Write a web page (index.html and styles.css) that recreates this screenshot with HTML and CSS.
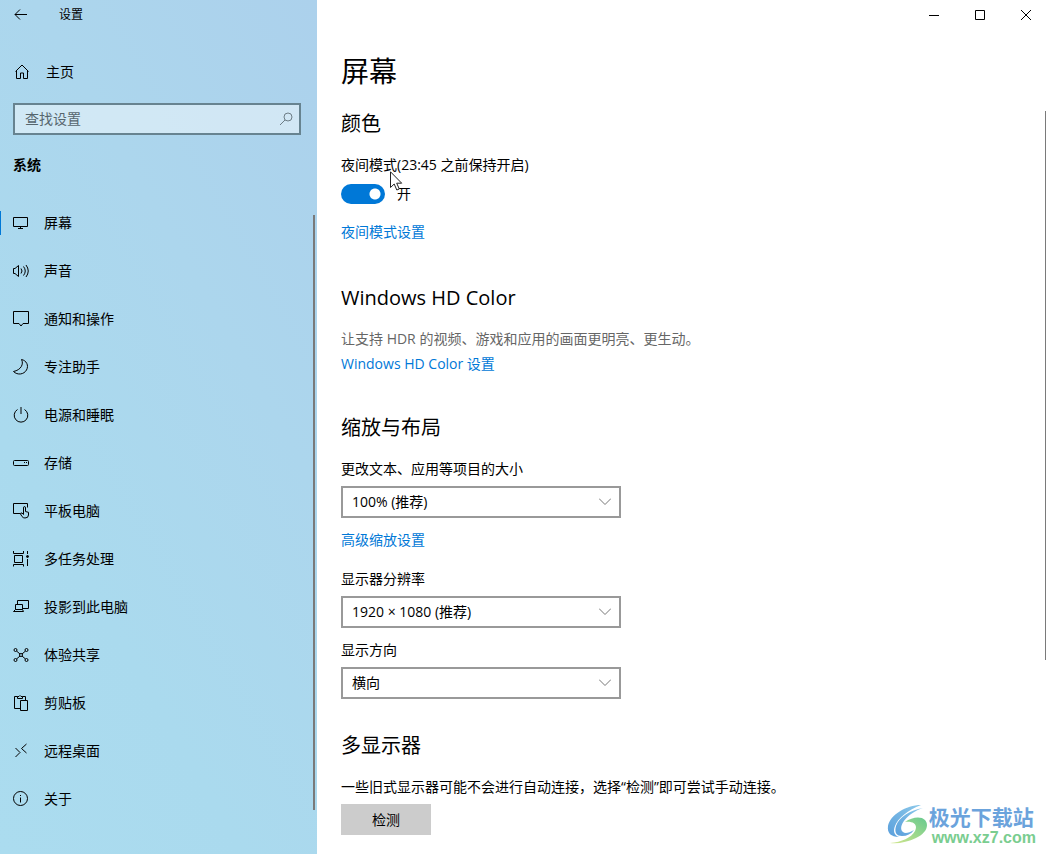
FILE: index.html
```html
<!DOCTYPE html>
<html lang="zh-CN">
<head>
    <meta charset="UTF-8">
    <meta name="viewport" content="width=device-width, initial-scale=1.0">
    <title>设置</title>
    <link rel="stylesheet" href="styles.css">
</head>
<body>
    <div class="window">
        <aside class="sidebar">
            <header class="title-bar">
                <button type="button" class="back" aria-label="返回">
                    <svg class="icon" viewBox="0 0 18 18"><path d="M15 8.500H3M8 3.500l-5 5 5 5"/></svg>
                </button>
                <span class="app-name">设置</span>
            </header>
            <a href="#" class="home">
                <svg class="icon" viewBox="0 0 18 18"><path d="M2.500 8.500L9 2l6.500 6.500M3.500 8v7.500h4V10h3v5.500h4V8"/></svg>
                主页
            </a>
            <div class="search">
                <input type="text" id="search" aria-label="查找设置" placeholder="查找设置">
                <svg class="icon" viewBox="0 0 18 18"><circle cx="11" cy="7" r="4"/><path d="M8 10l-5 5"/></svg>
            </div>
            <h2 class="group">系统</h2>
            <nav class="nav">
                <a href="#" class="active">
                    <svg class="icon" viewBox="0 0 18 18"><path d="M1.500 3.500h14v9h-14zM8.500 12.500v2M6 14.500h5"/></svg>
                    屏幕
                </a>
                <a href="#">
                    <svg class="icon" viewBox="0 0 18 18"><path d="M1.500 6.500H3l3.500-3v11l-3.500-3H1.500zM9 6.500q2 2.500 0 5M11.500 4.500q3.500 4.500 0 9M14 3q4.500 6 0 12"/></svg>
                    声音
                </a>
                <a href="#">
                    <svg class="icon" viewBox="0 0 18 18"><path d="M1.500 1.500h15v12H11L9 16l-2-2.500H1.500z"/></svg>
                    通知和操作
                </a>
                <a href="#">
                    <svg class="icon" viewBox="0 0 18 18"><path d="M9.500 1.500C12 6 9 12 1.500 13.500c4 4 10.500 3 13-1.500S14.500 2.500 9.500 1.500z"/></svg>
                    专注助手
                </a>
                <a href="#">
                    <svg class="icon" viewBox="0 0 18 18"><path d="M9 1v7M5.500 3.500a6.800 6.800 0 1 0 7 0"/></svg>
                    电源和睡眠
                </a>
                <a href="#">
                    <svg class="icon" viewBox="0 0 18 18"><rect x="1.500" y="6.500" width="15" height="5" rx="1"/><path d="M12 8.500h1M14 8.500h1"/></svg>
                    存储
                </a>
                <a href="#">
                    <svg class="icon" viewBox="0 0 18 18"><path d="M8 11.500H1.500v-10h14v4M11.500 11V6q0-1.500 1-1.500t1 1.500v3.500l3 .8v2.700q0 3-3.500 3-2 0-3-1.500L8.500 12q0-1.500 1.500-1l1.500 1.500V10"/></svg>
                    平板电脑
                </a>
                <a href="#">
                    <svg class="icon" viewBox="0 0 18 18"><path d="M1.500 1v2.500h10V1M2.500 5.500h8v7h-8zM1.500 16.500v-2h10v2M15.500 1v3M15.500 9v7"/><circle cx="15.500" cy="6.500" r="1" fill="currentColor"/></svg>
                    多任务处理
                </a>
                <a href="#">
                    <svg class="icon" viewBox="0 0 18 18"><path d="M5.500 6.500v-4h11v8H11M3.500 6.500h7v5h-7zM3.500 11.500l-2 2h10l-1-2"/></svg>
                    投影到此电脑
                </a>
                <a href="#">
                    <svg class="icon" viewBox="0 0 18 18"><circle cx="3.500" cy="4" r="1.500"/><circle cx="14.500" cy="4" r="1.500"/><circle cx="3.500" cy="14" r="1.500"/><circle cx="14.500" cy="14" r="1.500"/><circle cx="9" cy="9" r="1.500"/><path d="M4.500 5l3.500 3M13.500 5L10 8M4.500 13L8 10M13.500 13L10 10"/></svg>
                    体验共享
                </a>
                <a href="#">
                    <svg class="icon" viewBox="0 0 18 18"><path d="M8.500 14.500h-6v-12h3M10.500 2.500h3v4M5.500 4.500v-2H7q1-2 2 0h1.500v2zM8.500 6.500h7v10h-7z"/></svg>
                    剪贴板
                </a>
                <a href="#">
                    <svg class="icon" viewBox="0 0 18 18"><path d="M3.500 6L8 10.500 3.500 15M14.500 2L9.500 6.500 14.500 11"/></svg>
                    远程桌面
                </a>
                <a href="#">
                    <svg class="icon" viewBox="0 0 18 18"><circle cx="8.500" cy="8.500" r="7"/><path d="M8.500 7.500v5M8.500 5v1"/></svg>
                    关于
                </a>
            </nav>
            <div class="scrollbar"></div>
        </aside>

        <main class="content">
            <div class="window-buttons">
                <button type="button" aria-label="最小化"><svg viewBox="0 0 10 10"><path d="M0 5.500h10"/></svg></button>
                <button type="button" aria-label="最大化"><svg viewBox="0 0 10 10"><path d="M.5 .5h9v9h-9z"/></svg></button>
                <button type="button" aria-label="关闭"><svg viewBox="0 0 10 10"><path d="M0 0l10 10M10 0L0 10"/></svg></button>
            </div>

            <h1>屏幕</h1>

            <section>
                <h2>颜色</h2>
                <label for="night">夜间模式(23:45 之前保持开启)</label>
                <div class="toggle">
                    <input type="checkbox" id="night" checked>
                    <span>开</span>
                    <svg class="cursor" viewBox="0 0 13 20"><path d="M.5 .8v15.700l3.700-3.500 2.600 6 2.500-1-2.600-5.800h5z"/></svg>
                </div>
                <a href="#">夜间模式设置</a>
            </section>

            <section>
                <h2>Windows HD Color</h2>
                <p class="hint">让支持 HDR 的视频、游戏和应用的画面更明亮、更生动。</p>
                <a href="#">Windows HD Color 设置</a>
            </section>

            <section class="layout">
                <h2>缩放与布局</h2>
                <div class="field">
                    <label for="scale">更改文本、应用等项目的大小</label>
                    <div class="select">
                        <select id="scale"><option>100% (推荐)</option></select>
                        <svg viewBox="0 0 12 7"><path d="M0 .5l6 6 6-6"/></svg>
                    </div>
                </div>
                <a href="#" class="scale-link">高级缩放设置</a>
                <div class="field">
                    <label for="resolution">显示器分辨率</label>
                    <div class="select">
                        <select id="resolution"><option>1920 × 1080 (推荐)</option></select>
                        <svg viewBox="0 0 12 7"><path d="M0 .5l6 6 6-6"/></svg>
                    </div>
                </div>
                <div class="field">
                    <label for="orientation">显示方向</label>
                    <div class="select">
                        <select id="orientation"><option>横向</option></select>
                        <svg viewBox="0 0 12 7"><path d="M0 .5l6 6 6-6"/></svg>
                    </div>
                </div>
            </section>

            <section class="displays">
                <h2>多显示器</h2>
                <p>一些旧式显示器可能不会进行自动连接，选择“检测”即可尝试手动连接。</p>
                <button type="button" class="detect">检测</button>
            </section>
            <div class="scrollbar"></div>
        </main>

        <div class="watermark">
            <svg viewBox="0 0 42 42">
                <defs>
                    <linearGradient id="blue" x1="0" y1="1" x2="1" y2="0">
                        <stop offset="0" stop-color="#5a9fdc"/>
                        <stop offset="1" stop-color="#8cc9ea"/>
                    </linearGradient>
                    <linearGradient id="green" x1="0" y1="1" x2="1" y2="0">
                        <stop offset="0" stop-color="#d3e78c"/>
                        <stop offset="1" stop-color="#67c98f"/>
                    </linearGradient>
                </defs>
                <path fill="url(#blue)" d="M34 1C19 1 3 11 1 22c-1 7 3 11 11 11-5-2-6-6-4-11C11 14 21 6 34 1z"/>
                <path fill="url(#blue)" d="M36 4C23 6 12 13 9 22c-2 7 1 10 6 10 5 0 9-2 12-6-5 3-9 4-11 2C10 23 20 9 36 4z"/>
                <path fill="url(#green)" d="M18 18c7-5 16-6 20-2 5 6 0 14-9 18-8 4-18 6-26 5 12-1 21-5 25-12 3-6-1-10-10-9z"/>
            </svg>
            <div>
                <strong>极光下载站</strong>
                <span>www.xz7.com</span>
            </div>
        </div>
    </div>
</body>
</html>
```

FILE: styles.css
```css
* {
    box-sizing: border-box;
}

body {
    margin: 0;
    font-family: "Open Sans", "Noto Sans CJK SC", sans-serif;
    font-size: 14px;
    line-height: 20px;
    color: #000;
    background-color: #fff;
}

h1, h2, p {
    margin: 0;
    font-weight: normal;
}

a {
    color: #0078d7;
    text-decoration: none;
}

button, input, select {
    font: inherit;
    color: inherit;
}

svg {
    fill: none;
    stroke: currentColor;
}

.window {
    position: relative;
    display: flex;
    min-height: 100vh;
}

/* Sidebar */
.sidebar {
    position: relative;
    flex: 0 0 317px;
    background: linear-gradient(240deg, #acd1ec 0%, #acd6ed 35%, #aadaee 70%, #abdcef 100%);
}

.icon {
    flex: none;
    width: 18px;
    height: 18px;
}

.title-bar {
    display: flex;
    align-items: center;
    height: 30px;
    font-size: 12px;
}

.back {
    display: flex;
    width: 59px;
    padding: 0 12px;
    border: none;
    background: none;
}

.home {
    display: flex;
    align-items: center;
    gap: 15px;
    height: 48px;
    margin-top: 18px;
    padding-left: 13px;
    color: #000;
}

.search {
    display: flex;
    align-items: center;
    height: 32px;
    margin: 7px 16px 0 13px;
    padding: 0 4px 0 10px;
    border: 2px solid #678390;
    background-color: rgba(255, 255, 255, 0.45);
    color: #6d7d86;
}

.search input {
    flex: 1;
    min-width: 0;
    padding: 0;
    border: none;
    outline: none;
    background: none;
}

.search input::placeholder {
    color: #56666e;
    opacity: 1;
}

.group {
    margin: 20px 13px 24px;
    font-size: 14px;
    font-weight: bold;
}

.nav a {
    display: flex;
    align-items: center;
    gap: 14px;
    height: 48px;
    padding-left: 12px;
    color: #000;
}

.nav .active {
    background: linear-gradient(#0078d7, #0078d7) left center / 1px 24px no-repeat;
}

.scrollbar {
    position: absolute;
    top: 111px;
    right: 0;
    width: 1px;
    height: 549px;
    background-color: #7a7a7a;
}

.sidebar .scrollbar {
    top: 215px;
    right: 2px;
    width: 2px;
    height: 595px;
}

/* Content */
.content {
    position: relative;
    flex: 1;
    padding: 0 0 19px 24px;
}

.window-buttons {
    display: flex;
    justify-content: flex-end;
    margin-right: -3px;
}

.window-buttons button {
    display: flex;
    align-items: center;
    justify-content: center;
    width: 46px;
    height: 30px;
    padding: 0;
    border: none;
    background: none;
}

.window-buttons svg {
    width: 10px;
    height: 10px;
}

h1 {
    margin: 22px 0 19px;
    font-size: 28px;
    line-height: 38px;
}

section {
    margin-bottom: 41px;
}

section h2 {
    margin-bottom: 16px;
    font-size: 20px;
    line-height: 30px;
}

section > a,
section > label {
    display: block;
    width: fit-content;
}

.toggle {
    position: relative;
    display: flex;
    align-items: center;
    gap: 12px;
    margin: 9px 0 18px;
}

.toggle input {
    appearance: none;
    width: 44px;
    height: 20px;
    margin: 0;
    border-radius: 10px;
    background: radial-gradient(circle at 34px 10px, #fff 5px, #0078d7 6px);
}

.cursor {
    position: absolute;
    left: 49px;
    top: -13px;
    width: 13px;
    height: 20px;
    fill: #fff;
    stroke: #222;
}

.hint {
    margin-bottom: 5px;
    color: #666;
}

.layout {
    margin-top: -2px;
}

.field {
    margin-bottom: 12px;
}

.field label {
    display: block;
    margin-bottom: 7px;
}

.scale-link {
    margin-bottom: 19px;
}

.select {
    position: relative;
    width: 280px;
    max-width: 100%;
}

.select select {
    display: block;
    appearance: none;
    width: 100%;
    height: 32px;
    padding: 0 30px 0 9px;
    border: 2px solid #999;
    border-radius: 0;
    background-color: #fff;
}

.select svg {
    position: absolute;
    right: 10px;
    top: 12px;
    width: 12px;
    height: 7px;
    color: #777;
    pointer-events: none;
}

.displays {
    margin: -9px 0 0;
}

.detect {
    display: block;
    width: 90px;
    height: 31px;
    margin-top: 7px;
    padding: 0;
    border: none;
    background-color: #ccc;
}

/* Site mark */
.watermark {
    position: absolute;
    right: 10px;
    bottom: 7px;
    display: flex;
    align-items: center;
}

.watermark svg {
    width: 42px;
    height: 42px;
    stroke: none;
}

.watermark strong,
.watermark span {
    display: block;
}

.watermark strong {
    font-family: "Noto Sans CJK SC", sans-serif;
    font-size: 21px;
    line-height: 26px;
    color: #6ba3dc;
}

.watermark span {
    padding-left: 3px;
    font-family: "Liberation Sans", sans-serif;
    font-size: 16px;
    font-weight: bold;
    line-height: 18px;
    color: #7acd90;
}
```
